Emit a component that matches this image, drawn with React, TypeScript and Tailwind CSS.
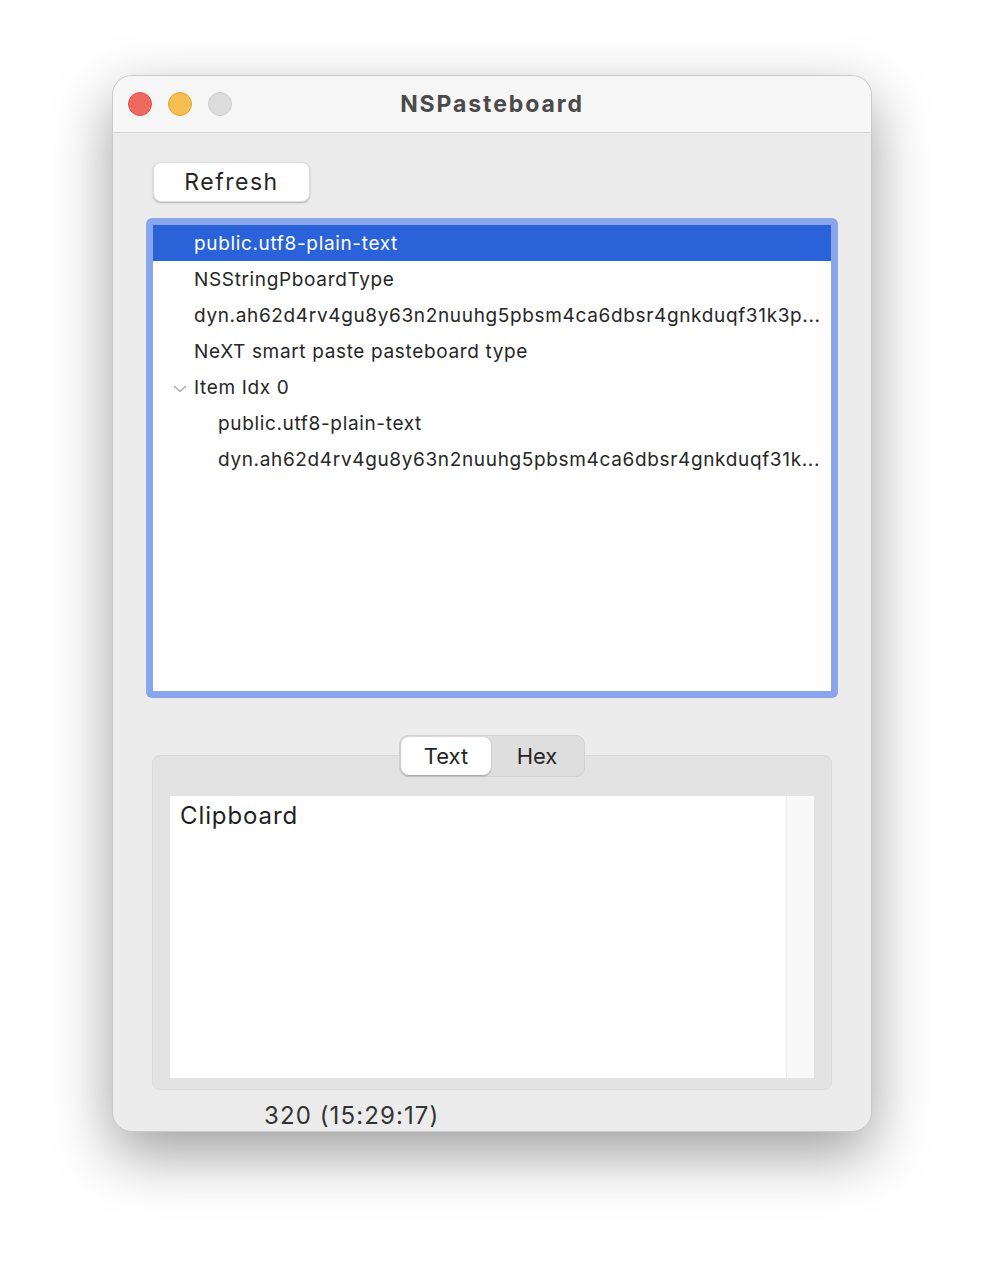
// App.tsx — NSPasteboard inspector window

const rows = [
  { label: 'public.utf8-plain-text', indent: 0, selected: true },
  { label: 'NSStringPboardType', indent: 0 },
  { label: 'dyn.ah62d4rv4gu8y63n2nuuhg5pbsm4ca6dbsr4gnkduqf31k3p...', indent: 0 },
  { label: 'NeXT smart paste pasteboard type', indent: 0 },
  { label: 'Item Idx 0', indent: 0, expandable: true },
  { label: 'public.utf8-plain-text', indent: 1 },
  { label: 'dyn.ah62d4rv4gu8y63n2nuuhg5pbsm4ca6dbsr4gnkduqf31k...', indent: 1 },
];

function TrafficLights() {
  return (
    <div className="flex items-center gap-[16px]">
      <span className="w-[24px] h-[24px] rounded-full bg-[#ee6a5f] border border-[#d8564b]" />
      <span className="w-[24px] h-[24px] rounded-full bg-[#f5be4f] border border-[#dca33a]" />
      <span className="w-[24px] h-[24px] rounded-full bg-[#dcdcdc] border border-[#cbcbcb]" />
    </div>
  );
}

function Chevron() {
  return (
    <svg width="14" height="10" viewBox="0 0 14 10" fill="none">
      <path d="M1.5 2.5 L7 7.5 L12.5 2.5" stroke="#a8a8a8" strokeWidth="1.4" strokeLinecap="round" strokeLinejoin="round" />
    </svg>
  );
}

function Row({ label, indent, selected, expandable }: { label: string; indent: number; selected?: boolean; expandable?: boolean }) {
  return (
    <div
      className={
        'h-[36px] pt-[3px] flex items-center whitespace-nowrap overflow-hidden ' +
        (selected ? 'bg-[#2a62d9] text-white' : 'text-[#262626]')
      }
    >
      <div className="w-[41px] shrink-0 flex justify-end pr-[7px]">{expandable && <Chevron />}</div>
      {indent > 0 && <div className="w-[24px] shrink-0" />}
      <span className="text-[19px] tracking-[0.65px]">{label}</span>
    </div>
  );
}

export default function App() {
  return (
    <div className="min-h-[1280px] bg-white flex justify-center pt-[75px]" style={{ fontFamily: 'Inter, "Noto Sans", sans-serif' }}>
      <div className="w-[760px] h-[1057px] rounded-[20px] bg-[#ececec] border border-[#c9c9c9] overflow-hidden shadow-[0_22px_60px_rgba(0,0,0,0.38)] flex flex-col">
        {/* Title bar */}
        <div className="h-[57px] shrink-0 bg-[#f6f6f6] border-b border-[#d4d4d4] relative flex items-center pl-[15px]">
          <TrafficLights />
          <div className="absolute inset-0 flex items-center justify-center pointer-events-none">
            <span className="text-[23px] font-bold text-[#4a4a4a] tracking-[1.9px]">NSPasteboard</span>
          </div>
        </div>

        {/* Content */}
        <div className="flex-1 flex flex-col px-[33px] pt-[29px]">
          <div className="pl-[7px]">
            <button className="w-[157px] h-[40px] bg-white rounded-[8px] shadow-[0_1px_2px_rgba(0,0,0,0.25)] border border-[#dcdcdc] text-[23px] tracking-[1.5px] text-[#262626]">
              Refresh
            </button>
          </div>

          {/* Outline view with focus ring */}
          <div className="mt-[16px] h-[480px] rounded-[6px] bg-[#8aa6ea] p-[7px]">
            <div className="h-full bg-white overflow-hidden">
              {rows.map((r, i) => (
                <Row key={i} {...r} />
              ))}
            </div>
          </div>

          {/* Tab view */}
          <div className="mt-[37px] mx-[6px] relative">
            <div className="absolute top-0 left-0 right-0 flex justify-center z-10">
              <div className="flex h-[42px] rounded-[9px] bg-[#dedede] border border-[#d2d2d2] p-[1px]">
                <div className="w-[90px] rounded-[8px] bg-white shadow-[0_1px_2px_rgba(0,0,0,0.3)] flex items-center justify-center text-[22px] text-[#262626]">
                  Text
                </div>
                <div className="w-[92px] flex items-center justify-center text-[22px] text-[#262626]">Hex</div>
              </div>
            </div>
            <div className="mt-[20px] h-[335px] rounded-[8px] bg-[#e3e3e3] border border-[#dadada] pt-[40px] px-[17px] pb-[11px]">
              <div className="h-full flex">
                <div className="flex-1 bg-white px-[10px] pt-[2px]">
                  <span className="text-[24px] tracking-[0.9px] text-[#1f1f1f]">Clipboard</span>
                </div>
                <div className="w-[28px] bg-[#f9f9f9] border-l border-[#ececec]" />
              </div>
            </div>
          </div>

          <div className="pl-[118px] mt-[8px] text-[24px] tracking-[1.1px] text-[#333333]">320 (15:29:17)</div>
        </div>
      </div>
    </div>
  );
}
